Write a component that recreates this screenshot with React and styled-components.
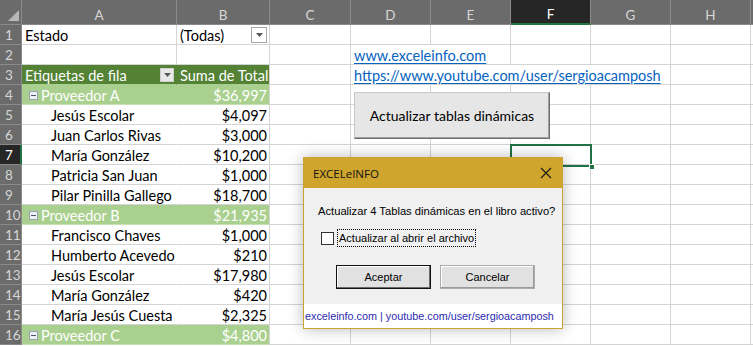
import React from 'react'
import styled, { createGlobalStyle, css } from 'styled-components'

const GlobalStyle = createGlobalStyle`
    html, body { margin: 0; padding: 0; background: #ffffff; overflow: hidden; }
    * { box-sizing: border-box; }
`

const GRID = '#d4d4d4'
const HEAD_BG = '#6b6b6b'
const EXCEL_GREEN = '#217346'

const columns = ['', 'A', 'B', 'C', 'D', 'E', 'F', 'G', 'H', '']

const rows = [
    { n: 1, kind: 'filter', a: 'Estado', b: '(Todas)' },
    { n: 2 },
    { n: 3, kind: 'head', a: 'Etiquetas de fila', b: 'Suma de Total' },
    { n: 4, kind: 'group', a: 'Proveedor A', b: '$36,997' },
    { n: 5, kind: 'item', a: 'Jesús Escolar', b: '$4,097' },
    { n: 6, kind: 'item', a: 'Juan Carlos Rivas', b: '$3,000' },
    { n: 7, kind: 'item', a: 'María González', b: '$10,200' },
    { n: 8, kind: 'item', a: 'Patricia San Juan', b: '$1,000' },
    { n: 9, kind: 'item', a: 'Pilar Pinilla Gallego', b: '$18,700' },
    { n: 10, kind: 'group', a: 'Proveedor B', b: '$21,935' },
    { n: 11, kind: 'item', a: 'Francisco Chaves', b: '$1,000' },
    { n: 12, kind: 'item', a: 'Humberto Acevedo', b: '$210' },
    { n: 13, kind: 'item', a: 'Jesús Escolar', b: '$17,980' },
    { n: 14, kind: 'item', a: 'María González', b: '$420' },
    { n: 15, kind: 'item', a: 'María Jesús Cuesta', b: '$2,325' },
    { n: 16, kind: 'group', a: 'Proveedor C', b: '$4,800' },
]

// hyperlinks in column D, spilling over the next empty cells
const links = {
    2: { text: 'www.exceleinfo.com', span: 2 },
    3: { text: 'https://www.youtube.com/user/sergioacamposh', span: 4 },
}

const ACTIVE_COL = 6
const ACTIVE_ROW = 7

const Arrow = () => (
    <svg width="7" height="4" viewBox="0 0 7 4">
        <path d="M0 0 H7 L3.5 4 Z" fill="#595959" />
    </svg>
)

const App = () => {
    return (
        <Sheet>
            <GlobalStyle />
            <Grid>
                <Corner>
                    <svg width="22" height="25" viewBox="0 0 22 25">
                        <path d="M8 21 L19 21 L19 10 Z" fill="#b8b8b8" />
                    </svg>
                </Corner>
                {columns.slice(1).map((c, i) => (
                    <ColHeader key={i} $active={i + 1 === ACTIVE_COL}>{c}</ColHeader>
                ))}

                {rows.map(row => {
                    const link = links[row.n]
                    const rest = []
                    for (let col = 3; col < columns.length; col++) {
                        if (link && col === 4) {
                            rest.push(
                                <LinkCell key={col} style={{ gridColumn: `span ${link.span}` }}>
                                    <Link>{link.text}</Link>
                                </LinkCell>
                            )
                            col += link.span - 1
                        } else {
                            rest.push(<Cell key={col} />)
                        }
                    }
                    return (
                        <React.Fragment key={row.n}>
                            <RowHeader $active={row.n === ACTIVE_ROW}>{row.n}</RowHeader>
                            {renderPivot(row)}
                            {rest}
                        </React.Fragment>
                    )
                })}
            </Grid>

            <Selection>
                <Handle />
            </Selection>

            <MacroButton>Actualizar tablas dinámicas</MacroButton>

            <Dialog>
                <TitleBar>
                    <Title>EXCELeINFO</Title>
                    <svg width="12" height="12" viewBox="0 0 12 12">
                        <path d="M1 1 L11 11 M11 1 L1 11" stroke="#1a1a1a" strokeWidth="1.1" />
                    </svg>
                </TitleBar>
                <DialogBody>
                    <Message>Actualizar 4 Tablas dinámicas en el libro activo?</Message>
                    <CheckRow>
                        <CheckBox />
                        <CheckLabel>Actualizar al abrir el archivo</CheckLabel>
                    </CheckRow>
                    <Buttons>
                        <DialogButton $primary>Aceptar</DialogButton>
                        <DialogButton>Cancelar</DialogButton>
                    </Buttons>
                </DialogBody>
                <Footer>exceleinfo.com | youtube.com/user/sergioacamposh</Footer>
            </Dialog>
        </Sheet>
    )
}

const renderPivot = (row) => {
    switch (row.kind) {
        case 'filter':
            return (
                <>
                    <Cell>{row.a}</Cell>
                    <Cell $between>
                        {row.b}
                        <FilterButton><Arrow /></FilterButton>
                    </Cell>
                </>
            )
        case 'head':
            return (
                <>
                    <PivotCell $tone="head" $between $noRight>
                        {row.a}
                        <HeadButton><Arrow /></HeadButton>
                    </PivotCell>
                    <PivotCell $tone="head">{row.b}</PivotCell>
                </>
            )
        case 'group':
            return (
                <>
                    <PivotCell $tone="group" $noRight>
                        <Collapse />
                        {row.a}
                    </PivotCell>
                    <PivotCell $tone="group" $right>{row.b}</PivotCell>
                </>
            )
        case 'item':
            return (
                <>
                    <PivotCell $noRight $indent>{row.a}</PivotCell>
                    <PivotCell $right>{row.b}</PivotCell>
                </>
            )
        default:
            return (
                <>
                    <Cell />
                    <Cell />
                </>
            )
    }
}

export default App


const Sheet = styled.div`
    position: relative;
    width: 753px; height: 346px;
    overflow: hidden;
    font-family: Lato, "Liberation Sans", sans-serif;
    font-size: 14.5px;
    color: #000;
`
const Grid = styled.div`
    display: grid;
    grid-template-columns: 22px 155px 93px 81px 80px 80px 80px 80px 80px 80px;
    grid-template-rows: 25px repeat(16, 20px);
`
const Corner = styled.div`
    background: ${HEAD_BG};
    border-right: 1px solid #8a8a8a;
    border-bottom: 1px solid #8a8a8a;
    svg { display: block; }
`
const ColHeader = styled.div`
    display: flex;
    align-items: center;
    justify-content: center;
    padding-top: 5px;
    background: ${({ $active }) => $active ? '#262626' : HEAD_BG};
    color: ${({ $active }) => $active ? '#ffffff' : '#d6d6d6'};
    font-size: 13.5px;
    border-right: 1px solid #8a8a8a;
    border-bottom: ${({ $active }) => $active ? `2px solid ${EXCEL_GREEN}` : '1px solid #8a8a8a'};
`
const RowHeader = styled.div`
    display: flex;
    align-items: center;
    padding-left: 5px;
    background: ${({ $active }) => $active ? '#262626' : HEAD_BG};
    color: ${({ $active }) => $active ? '#ffffff' : '#d6d6d6'};
    font-size: 13.5px;
    border-bottom: 1px solid #8a8a8a;
    border-right: ${({ $active }) => $active ? `2px solid ${EXCEL_GREEN}` : '1px solid #8a8a8a'};
`
const Cell = styled.div`
    display: flex;
    align-items: center;
    justify-content: ${({ $between }) => $between ? 'space-between' : 'flex-start'};
    padding: 1px 2px 0 3px;
    white-space: nowrap;
    overflow: hidden;
    border-right: 1px solid ${GRID};
    border-bottom: 1px solid ${GRID};
`
const PivotCell = styled(Cell)`
    justify-content: ${({ $right, $between }) => $right ? 'flex-end' : $between ? 'space-between' : 'flex-start'};
    padding-left: ${({ $indent }) => $indent ? '29px' : '3px'};
    ${({ $noRight }) => $noRight && css`border-right-color: transparent;`}
    ${({ $tone }) => $tone === 'head' && css`
        background: #548235;
        color: #ffffff;
        border-bottom-color: #a9d08e;
    `}
    ${({ $tone }) => $tone === 'group' && css`
        background: #a9d08e;
        color: #ffffff;
        padding-left: 7px;
        border-bottom-color: #c6e0b4;
    `}
    ${({ $tone, $noRight }) => $tone && $noRight && css`border-right-color: transparent;`}
`
const LinkCell = styled(Cell)`
    overflow: visible;
`
const Link = styled.span`
    color: #0563c1;
    text-decoration: underline;
    text-underline-offset: 2px;
`
const FilterButton = styled.span`
    display: flex;
    align-items: center;
    justify-content: center;
    width: 16px; height: 16px;
    background: #ffffff;
    border: 1px solid #a6a6a6;
    margin-top: -1px;
`
const HeadButton = styled(FilterButton)`
    width: 14px; height: 14px;
    background: #e8e8e8;
    border-color: #d0d0d0;
    margin-right: 0;
`
const Collapse = styled.span`
    position: relative;
    width: 9px; height: 9px;
    margin-right: 3px;
    background: #eef0f6;
    border: 1px solid #9aa3b5;
    &::after {
        content: '';
        position: absolute;
        left: 1px; right: 1px; top: 3px;
        height: 1px;
        background: #4a5670;
    }
`
const Selection = styled.div`
    position: absolute;
    left: 510px; top: 144px;
    width: 82px; height: 23px;
    border: 2px solid ${EXCEL_GREEN};
`
const Handle = styled.div`
    position: absolute;
    right: -5px; bottom: -5px;
    width: 6px; height: 6px;
    background: ${EXCEL_GREEN};
    border: 1px solid #ffffff;
`
const MacroButton = styled.button`
    position: absolute;
    left: 354px; top: 92px;
    width: 196px; height: 47px;
    padding: 0 0 1px;
    font-family: Lato, "Liberation Sans", sans-serif;
    font-size: 14px;
    color: #000;
    background: #e6e6e6;
    border: 1px solid #c8c8c8;
    border-right-color: #6e6e6e;
    border-bottom-color: #6e6e6e;
    box-shadow: inset -1px -1px 0 #a0a0a0;
`
const Dialog = styled.div`
    position: absolute;
    left: 303px; top: 157px;
    width: 260px; height: 172px;
    display: flex;
    flex-direction: column;
    background: #f0f0f0;
    border: 1px solid #c9a435;
    box-shadow: 0 0 14px rgba(0, 0, 0, 0.28);
    font-family: "Liberation Sans", Arial, sans-serif;
    font-size: 11px;
`
const TitleBar = styled.div`
    height: 30px;
    display: flex;
    align-items: center;
    justify-content: space-between;
    padding: 0 10px 0 9px;
    background: #cfa52d;
    svg { display: block; }
`
const Title = styled.span`
    font-family: "Open Sans", "Noto Sans", sans-serif;
    font-size: 11.5px;
    color: #111;
`
const DialogBody = styled.div`
    flex: 1;
    display: flex;
    flex-direction: column;
    padding: 17px 0 0 14px;
`
const Message = styled.div`
    color: #000;
    font-size: 11.2px;
`
const CheckRow = styled.div`
    display: flex;
    align-items: center;
    margin: 12px 0 0 3px;
`
const CheckBox = styled.span`
    width: 13px; height: 13px;
    background: #ffffff;
    border: 1px solid #333333;
    margin-right: 3px;
`
const CheckLabel = styled.span`
    padding: 2px 1px;
    border: 1px dotted #000;
`
const Buttons = styled.div`
    display: flex;
    gap: 9px;
    margin: 18px 0 0 18px;
`
const DialogButton = styled.div`
    width: 95px; height: 24px;
    display: flex;
    align-items: center;
    justify-content: center;
    background: #e1e1e1;
    color: #000;
    border: 1px solid ${({ $primary }) => $primary ? '#111111' : '#adadad'};
    box-shadow: ${({ $primary }) => $primary
        ? 'inset -1px -1px 0 #6a6a6a, inset 1px 1px 0 #ffffff'
        : 'inset -1px -1px 0 #9a9a9a, inset 1px 1px 0 #ffffff'};
`
const Footer = styled.div`
    height: 24px;
    display: flex;
    align-items: center;
    padding-left: 1px;
    background: #ffffff;
    color: #2a2ab0;
    font-size: 10.8px;
    white-space: nowrap;
    overflow: hidden;
`
